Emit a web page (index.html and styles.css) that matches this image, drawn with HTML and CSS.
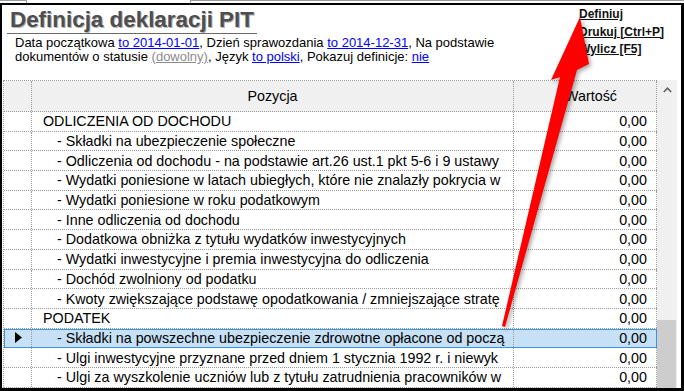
FILE: index.html
```html
<!DOCTYPE html>
<html lang="pl">
<head>
<meta charset="utf-8">
<title>Definicja deklaracji PIT</title>
<link rel="stylesheet" href="styles.css">
</head>
<body>
<div class="tabs"><span class="tab-a"></span><span class="tab-b"></span></div>
<main class="frame">
  <header class="head">
    <div class="info">
      <h1 class="title">Definicja deklaracji PIT</h1>
      <p class="params">Data początkowa <a class="lnk" href="#">to 2014-01-01</a>, Dzień sprawozdania <a class="lnk" href="#">to 2014-12-31</a>, Na podstawie<br>dokumentów o statusie <a class="lnk muted" href="#">(dowolny)</a>, Język <a class="lnk" href="#">to polski</a>, Pokazuj definicje: <a class="lnk" href="#">nie</a></p>
    </div>
    <nav class="actions">
      <a href="#">Definiuj</a>
      <a href="#">Drukuj [Ctrl+P]</a>
      <a href="#">Wylicz [F5]</a>
    </nav>
  </header>
  <section class="table">
    <div class="grid">
      <div class="row hdr"><div class="c rh"></div><div class="c head-txt">Pozycja</div><div class="c head-val">Wartość</div></div>
      <div class="row"><div class="c rh"></div><div class="c txt"><span class="t sec">ODLICZENIA OD DOCHODU</span></div><div class="c val">0,00</div></div>
      <div class="row"><div class="c rh"></div><div class="c txt"><span class="t item">- Składki na ubezpieczenie społeczne</span></div><div class="c val">0,00</div></div>
      <div class="row"><div class="c rh"></div><div class="c txt"><span class="t item">- Odliczenia od dochodu - na podstawie art.26 ust.1 pkt 5-6 i 9 ustawy</span></div><div class="c val">0,00</div></div>
      <div class="row"><div class="c rh"></div><div class="c txt"><span class="t item">- Wydatki poniesione w latach ubiegłych, które nie znalazły pokrycia w</span></div><div class="c val">0,00</div></div>
      <div class="row"><div class="c rh"></div><div class="c txt"><span class="t item">- Wydatki poniesione w roku podatkowym</span></div><div class="c val">0,00</div></div>
      <div class="row"><div class="c rh"></div><div class="c txt"><span class="t item">- Inne odliczenia od dochodu</span></div><div class="c val">0,00</div></div>
      <div class="row"><div class="c rh"></div><div class="c txt"><span class="t item">- Dodatkowa obniżka z tytułu wydatków inwestycyjnych</span></div><div class="c val">0,00</div></div>
      <div class="row"><div class="c rh"></div><div class="c txt"><span class="t item">- Wydatki inwestycyjne i premia inwestycyjna do odliczenia</span></div><div class="c val">0,00</div></div>
      <div class="row"><div class="c rh"></div><div class="c txt"><span class="t item">- Dochód zwolniony od podatku</span></div><div class="c val">0,00</div></div>
      <div class="row"><div class="c rh"></div><div class="c txt"><span class="t item">- Kwoty zwiększające podstawę opodatkowania / zmniejszające stratę</span></div><div class="c val">0,00</div></div>
      <div class="row"><div class="c rh"></div><div class="c txt"><span class="t sec">PODATEK</span></div><div class="c val">0,00</div></div>
      <div class="row sel"><div class="c rh"><svg class="cur" width="8" height="11" viewBox="0 0 8 11"><polygon points="0,0 7,5.5 0,11" fill="#000"/></svg></div><div class="c txt"><span class="t item">- Składki na powszechne ubezpieczenie zdrowotne opłacone od począ</span></div><div class="c val">0,00</div></div>
      <div class="row"><div class="c rh"></div><div class="c txt"><span class="t item">- Ulgi inwestycyjne przyznane przed dniem 1 stycznia 1992 r. i niewyk</span></div><div class="c val">0,00</div></div>
      <div class="row"><div class="c rh"></div><div class="c txt"><span class="t item">- Ulgi za wyszkolenie uczniów lub z tytułu zatrudnienia pracowników w</span></div><div class="c val">0,00</div></div>
    </div>
    <div class="scroll">
      <div class="up"><svg width="9" height="6" viewBox="0 0 9 6"><polyline points="0.8,5 4.5,1.2 8.2,5" fill="none" stroke="#606060" stroke-width="1.6"/></svg></div>
      <div class="gap"></div>
      <div class="thumb"></div>
    </div>
  </section>
</main>
<svg class="arrow" width="684" height="391" viewBox="0 0 684 391">
  <polygon points="580,17 589,64 577,70 505,327 502,326 560,77 551,80" fill="#ff0000"/>
</svg>
</body>
</html>
```
FILE: styles.css
```css
* { box-sizing: border-box; }

html, body {
  margin: 0;
  padding: 0;
  background: #fff;
  width: 684px;
  height: 391px;
  overflow: hidden;
  font-family: "Liberation Sans", Arial, sans-serif;
  color: #000;
  position: relative;
}

.tabs {
  display: flex;
  height: 3px;
}
.tab-a {
  width: 27px;
  border-top: 1px solid #9a9a9a;
  border-right: 1px solid #9a9a9a;
}
.tab-b {
  flex: 1;
  margin-left: 163px;
  border-top: 1px solid #9a9a9a;
  border-left: 1px solid #9a9a9a;
}

.frame {
  width: 684px;
  height: 388px;
  border-style: solid;
  border-color: #000;
  border-width: 2px 3px 3px 2px;
  display: flex;
  flex-direction: column;
  overflow: hidden;
}

.head {
  display: flex;
  justify-content: space-between;
  align-items: flex-start;
}

.info {
  display: flex;
  flex-direction: column;
  align-items: flex-start;
}

.title {
  margin: 3px 0 0 5px;
  padding: 0 3px 1px 3px;
  font-size: 22.4px;
  line-height: 24px;
  font-weight: bold;
  color: #4e4e4e;
  text-shadow: 1px 1px 0 #b4b4b4;
  border-bottom: 1px solid #6a6a6a;
}

.params {
  margin: 2px 0 0 13px;
  font-size: 13px;
  line-height: 14px;
}

.lnk { color: #0000ff; text-decoration: underline; }
.lnk.muted { color: #8c8c8c; }

.actions {
  width: 102px;
  margin-top: 1px;
  display: flex;
  flex-direction: column;
  align-items: flex-start;
}
.actions a {
  font-size: 12px;
  font-weight: bold;
  line-height: 17.5px;
  color: #111;
  text-decoration: underline;
}

.table {
  flex: 1;
  min-height: 0;
  margin: 16px 0 0 1px;
  display: flex;
  align-items: stretch;
}

.grid {
  width: 654px;
  border-left: 1px dotted #9a9a9a;
  border-top: 1px dotted #9a9a9a;
  overflow: hidden;
}

.row {
  display: grid;
  grid-template-columns: 28px 482px 143px;
  height: 19.7px;
  border-bottom: 1px dotted #9a9a9a;
  font-size: 14.3px;
}
.row.hdr {
  height: 31px;
  background: #f0f0f0;
}
.row.sel {
  background: #c6e0f6;
  outline: 1px solid #3d92e2;
  outline-offset: -1px;
}

.c {
  border-right: 1px dotted #9a9a9a;
  display: flex;
  align-items: center;
  overflow: hidden;
  white-space: nowrap;
}
.c.head-txt { justify-content: center; }
.c.head-val { justify-content: center; padding-left: 12px; }
.c.val { justify-content: flex-end; padding-right: 9px; }
.c.rh { padding-left: 11px; }

.t {
  display: block;
  overflow: hidden;
  width: calc(100% - 2px);
}
.t.sec { padding-left: 11px; }
.t.item { padding-left: 25px; }

.cur { display: block; }

.scroll {
  width: 20px;
  background: #f0f0f0;
  display: flex;
  flex-direction: column;
}
.up {
  height: 20px;
  display: flex;
  align-items: center;
  justify-content: center;
}
.up svg { display: block; }
.gap { height: 220px; }
.thumb {
  flex: 1;
  margin: 0 1px 0 0;
  background: #cdcdcd;
}

.arrow {
  position: absolute;
  left: 0;
  top: 0;
  pointer-events: none;
  filter: drop-shadow(2px 2px 2px rgba(0, 0, 0, 0.35));
}
```
